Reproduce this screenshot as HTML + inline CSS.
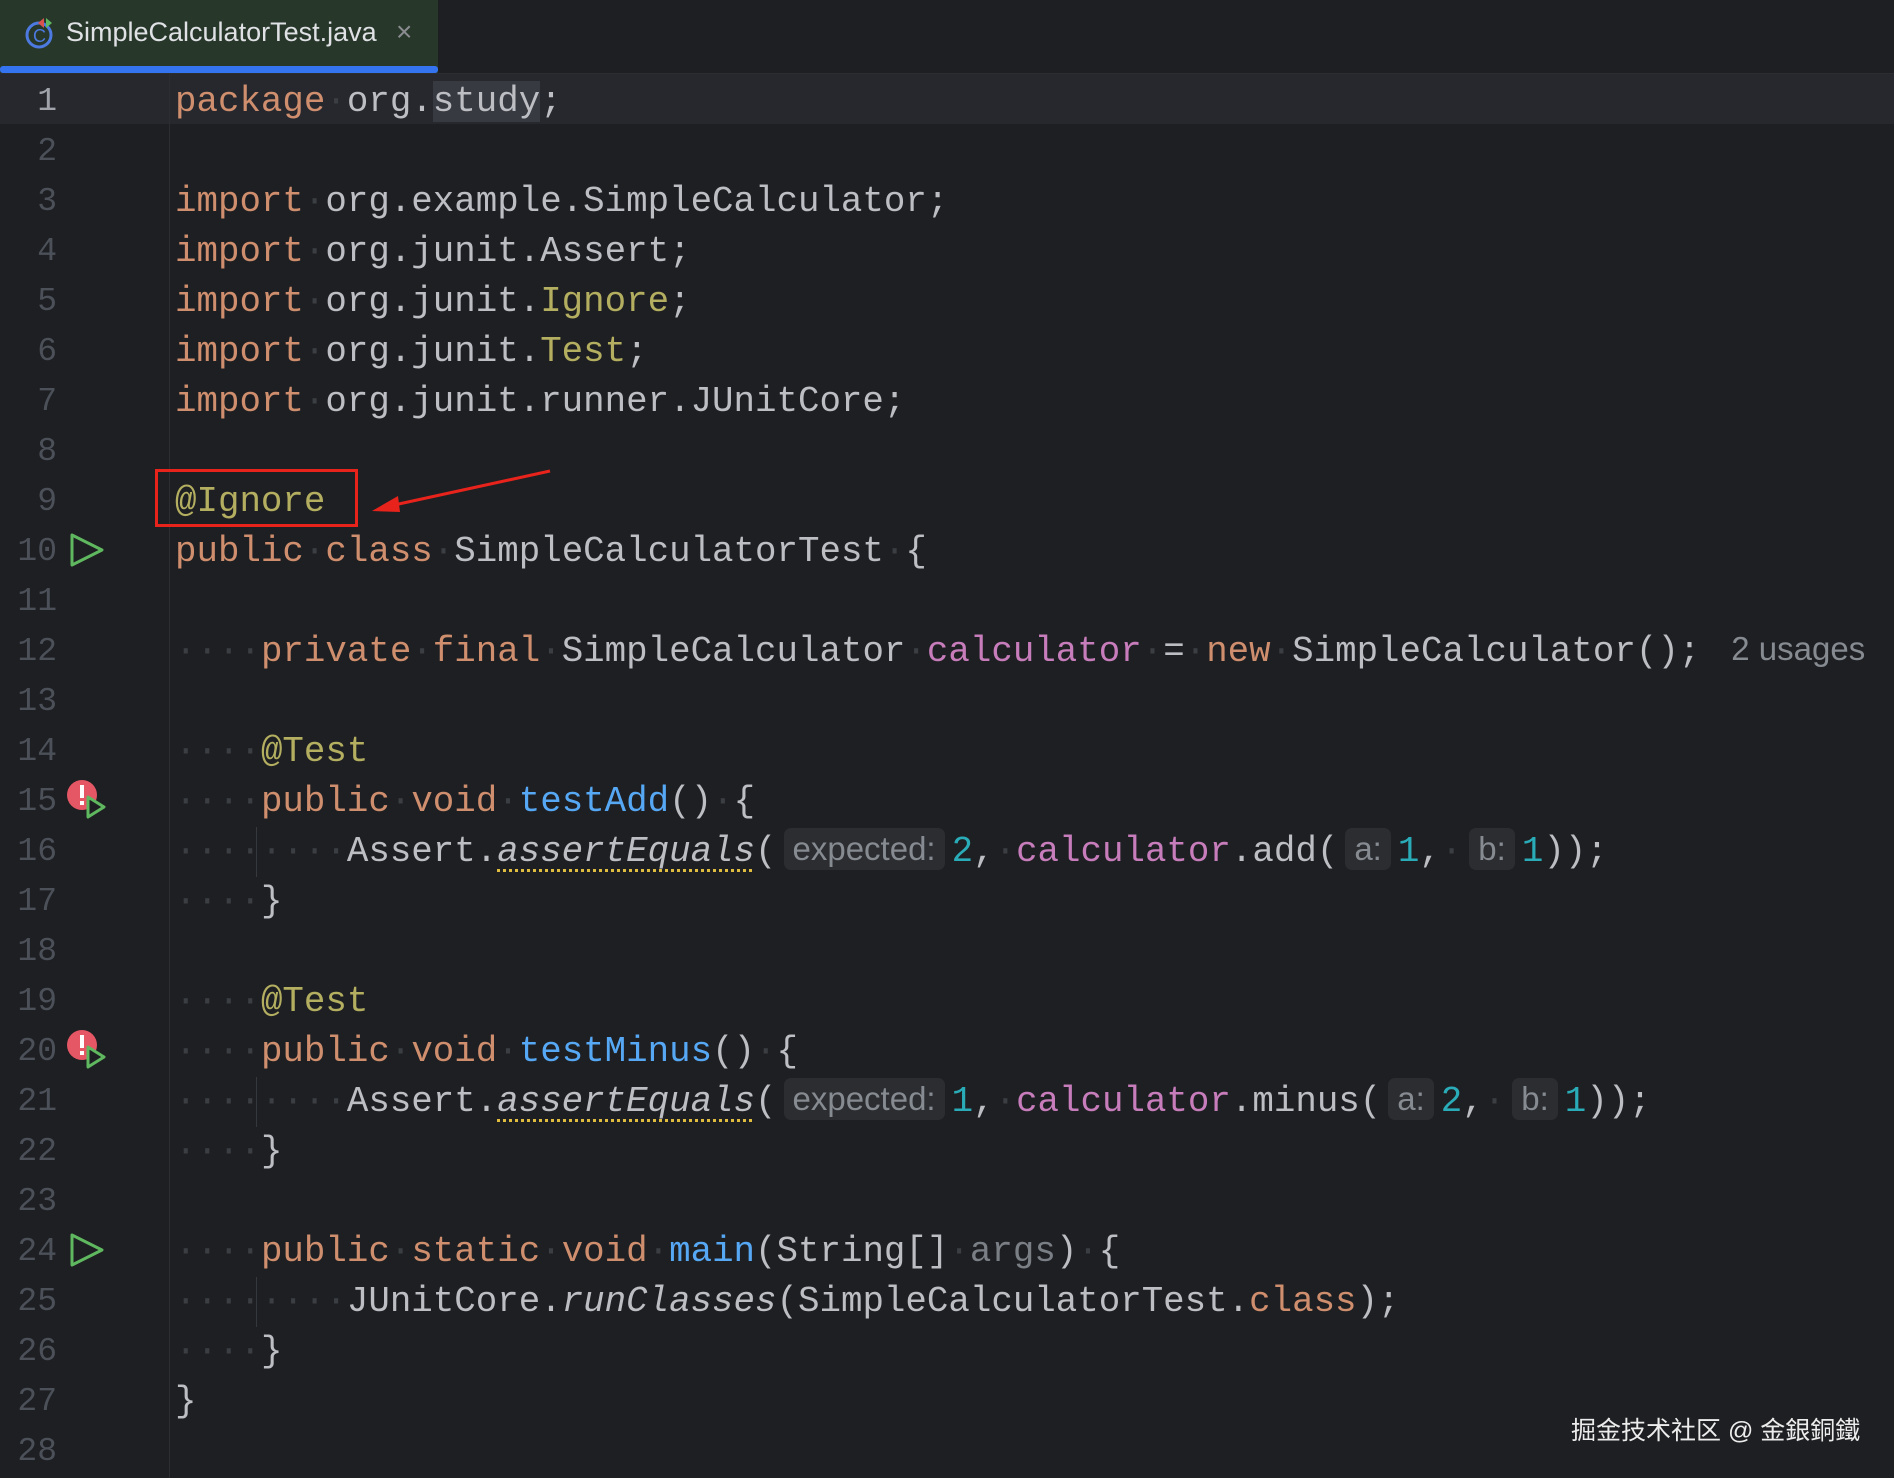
<!DOCTYPE html>
<html><head><meta charset="utf-8"><style>
body{margin:0;width:1894px;height:1478px;background:#1e1f22;overflow:hidden;position:relative;font-family:"Liberation Mono",monospace}
.tabbar{position:absolute;left:0;top:0;width:1894px;height:73px;background:#1e1f22;border-bottom:1px solid #2b2d30}
.tab{position:absolute;left:0;top:0;width:438px;height:73px;background:#27372a}
.tab .u{position:absolute;left:0;bottom:0;width:438px;height:7px;background:#3574f0;border-radius:3px}
.tab .t{position:absolute;left:66px;top:17px;font:27px "Liberation Sans",sans-serif;color:#dfe1e5}
.tab .x{position:absolute;left:396px;top:16px;font:28px "Liberation Sans",sans-serif;color:#8a8c90}
.cur{position:absolute;left:0;top:74px;width:1894px;height:50px;background:#26282e}
.sep{position:absolute;left:169px;top:74px;width:1px;height:1404px;background:#2b2d30}
.ln{position:absolute;left:0;width:57px;text-align:right;font-size:33px;line-height:50px;color:#4b5059;margin-top:3px}
.l{position:absolute;left:175px;height:50px;line-height:50px;font-size:35.8px;white-space:pre;color:#bcbec4;margin-top:3px}
.k{color:#cf8e6d}.a{color:#b3ae60}.m{color:#56a8f5}.f{color:#c77dbb}.n{color:#2aacb8}.p{color:#7a7e85}
.d{color:#3b3e43}
.h{display:inline-block;background:#2b2d30;color:#868a91;font:33px "Liberation Sans",sans-serif;border-radius:7px;padding:0 9px;line-height:42px;vertical-align:1px;margin:0 7px}
.i{font-style:italic}
.w{text-decoration:underline dotted #e0bd3f;text-underline-offset:8px;text-decoration-thickness:3px}
.g{position:absolute;left:256px;width:1px;background:#35383d}
</style></head><body>
<div class="tabbar"></div>
<div class="tab"><svg style="position:absolute;left:24px;top:16px" width="34" height="34" viewBox="0 0 34 34"><circle cx="15" cy="19" r="12" fill="none" stroke="#4c7ae0" stroke-width="3"/><text x="9" y="26" font-family="Liberation Sans" font-size="18" fill="#4c7ae0">C</text><path d="M20 2 L20 12 L14 7Z" fill="#d9534f"/><path d="M22 2 L22 12 L28 7Z" fill="#5fb85f"/></svg><span class="t">SimpleCalculatorTest.java</span><span class="x">×</span><div class="u"></div></div>
<div class="cur"></div>
<div class="sep"></div>
<div class="g" style="top:827px;height:50px"></div>
<div class="g" style="top:1077px;height:50px"></div>
<div class="g" style="top:1277px;height:50px"></div>

<div class="ln" style="top:74px;color:#a1a3ab">1</div>
<div class="ln" style="top:124px">2</div><div class="ln" style="top:174px">3</div><div class="ln" style="top:224px">4</div><div class="ln" style="top:274px">5</div><div class="ln" style="top:324px">6</div><div class="ln" style="top:374px">7</div><div class="ln" style="top:424px">8</div><div class="ln" style="top:474px">9</div><div class="ln" style="top:524px">10</div><div class="ln" style="top:574px">11</div><div class="ln" style="top:624px">12</div><div class="ln" style="top:674px">13</div><div class="ln" style="top:724px">14</div><div class="ln" style="top:774px">15</div><div class="ln" style="top:824px">16</div><div class="ln" style="top:874px">17</div><div class="ln" style="top:924px">18</div><div class="ln" style="top:974px">19</div><div class="ln" style="top:1024px">20</div><div class="ln" style="top:1074px">21</div><div class="ln" style="top:1124px">22</div><div class="ln" style="top:1174px">23</div><div class="ln" style="top:1224px">24</div><div class="ln" style="top:1274px">25</div><div class="ln" style="top:1324px">26</div><div class="ln" style="top:1374px">27</div><div class="ln" style="top:1424px">28</div>

<svg style="position:absolute;left:68px;top:531px" width="40" height="40"><path d="M4 4 L34 19 L4 34Z" fill="none" stroke="#5fb85f" stroke-width="3" stroke-linejoin="round"/></svg>
<svg style="position:absolute;left:68px;top:1231px" width="40" height="40"><path d="M4 4 L34 19 L4 34Z" fill="none" stroke="#5fb85f" stroke-width="3" stroke-linejoin="round"/></svg>
<svg style="position:absolute;left:64px;top:778px" width="50" height="45"><circle cx="18" cy="17" r="15" fill="#e55765"/><rect x="16" y="7" width="4" height="13" fill="#fff"/><rect x="16" y="23" width="4" height="4" fill="#fff"/><path d="M24 19 L40 29 L24 39Z" fill="#1e1f22" stroke="#5fb85f" stroke-width="3" stroke-linejoin="round"/></svg>
<svg style="position:absolute;left:64px;top:1028px" width="50" height="45"><circle cx="18" cy="17" r="15" fill="#e55765"/><rect x="16" y="7" width="4" height="13" fill="#fff"/><rect x="16" y="23" width="4" height="4" fill="#fff"/><path d="M24 19 L40 29 L24 39Z" fill="#1e1f22" stroke="#5fb85f" stroke-width="3" stroke-linejoin="round"/></svg>

<div class="l" style="top:74px"><span class="k">package</span><span class="d">·</span>org.<span style="background:#373b41">study</span>;</div>
<div class="l" style="top:174px"><span class="k">import</span><span class="d">·</span>org.example.SimpleCalculator;</div>
<div class="l" style="top:224px"><span class="k">import</span><span class="d">·</span>org.junit.Assert;</div>
<div class="l" style="top:274px"><span class="k">import</span><span class="d">·</span>org.junit.<span class="a">Ignore</span>;</div>
<div class="l" style="top:324px"><span class="k">import</span><span class="d">·</span>org.junit.<span class="a">Test</span>;</div>
<div class="l" style="top:374px"><span class="k">import</span><span class="d">·</span>org.junit.runner.JUnitCore;</div>
<div class="l" style="top:474px"><span class="a">@Ignore</span></div>
<div class="l" style="top:524px"><span class="k">public</span><span class="d">·</span><span class="k">class</span><span class="d">·</span>SimpleCalculatorTest<span class="d">·</span>{</div>
<div class="l" style="top:624px"><span class="d">····</span><span class="k">private</span><span class="d">·</span><span class="k">final</span><span class="d">·</span>SimpleCalculator<span class="d">·</span><span class="f">calculator</span><span class="d">·</span>=<span class="d">·</span><span class="k">new</span><span class="d">·</span>SimpleCalculator();<span class="h" style="background:none;margin-left:22px">2 usages</span></div>
<div class="l" style="top:724px"><span class="d">····</span><span class="a">@Test</span></div>
<div class="l" style="top:774px"><span class="d">····</span><span class="k">public</span><span class="d">·</span><span class="k">void</span><span class="d">·</span><span class="m">testAdd</span>()<span class="d">·</span>{</div>
<div class="l" style="top:824px"><span class="d">········</span>Assert.<span class="i w">assertEquals</span>(<span class="h">expected:</span><span class="n">2</span>,<span class="d">·</span><span class="f">calculator</span>.add(<span class="h">a:</span><span class="n">1</span>,<span class="d">·</span><span class="h">b:</span><span class="n">1</span>));</div>
<div class="l" style="top:874px"><span class="d">····</span>}</div>
<div class="l" style="top:974px"><span class="d">····</span><span class="a">@Test</span></div>
<div class="l" style="top:1024px"><span class="d">····</span><span class="k">public</span><span class="d">·</span><span class="k">void</span><span class="d">·</span><span class="m">testMinus</span>()<span class="d">·</span>{</div>
<div class="l" style="top:1074px"><span class="d">········</span>Assert.<span class="i w">assertEquals</span>(<span class="h">expected:</span><span class="n">1</span>,<span class="d">·</span><span class="f">calculator</span>.minus(<span class="h">a:</span><span class="n">2</span>,<span class="d">·</span><span class="h">b:</span><span class="n">1</span>));</div>
<div class="l" style="top:1124px"><span class="d">····</span>}</div>
<div class="l" style="top:1224px"><span class="d">····</span><span class="k">public</span><span class="d">·</span><span class="k">static</span><span class="d">·</span><span class="k">void</span><span class="d">·</span><span class="m">main</span>(String[]<span class="d">·</span><span class="p">args</span>)<span class="d">·</span>{</div>
<div class="l" style="top:1274px"><span class="d">········</span>JUnitCore.<span class="i">runClasses</span>(SimpleCalculatorTest.<span class="k">class</span>);</div>
<div class="l" style="top:1324px"><span class="d">····</span>}</div>
<div class="l" style="top:1374px">}</div>

<div style="position:absolute;left:155px;top:469px;width:197px;height:52px;border:3px solid #e8231c"></div>
<svg style="position:absolute;left:0;top:0" width="1894" height="600"><line x1="550" y1="471" x2="385" y2="507" stroke="#e8231c" stroke-width="3"/><path d="M372 511 L398 496 L400 512Z" fill="#e8231c"/></svg>

<div style="position:absolute;left:1571px;top:1411px;font:25px 'Liberation Sans','Noto Sans CJK SC',sans-serif;color:#ececec;white-space:pre">掘金技术社区 @ 金銀銅鐵</div>
</body></html>
